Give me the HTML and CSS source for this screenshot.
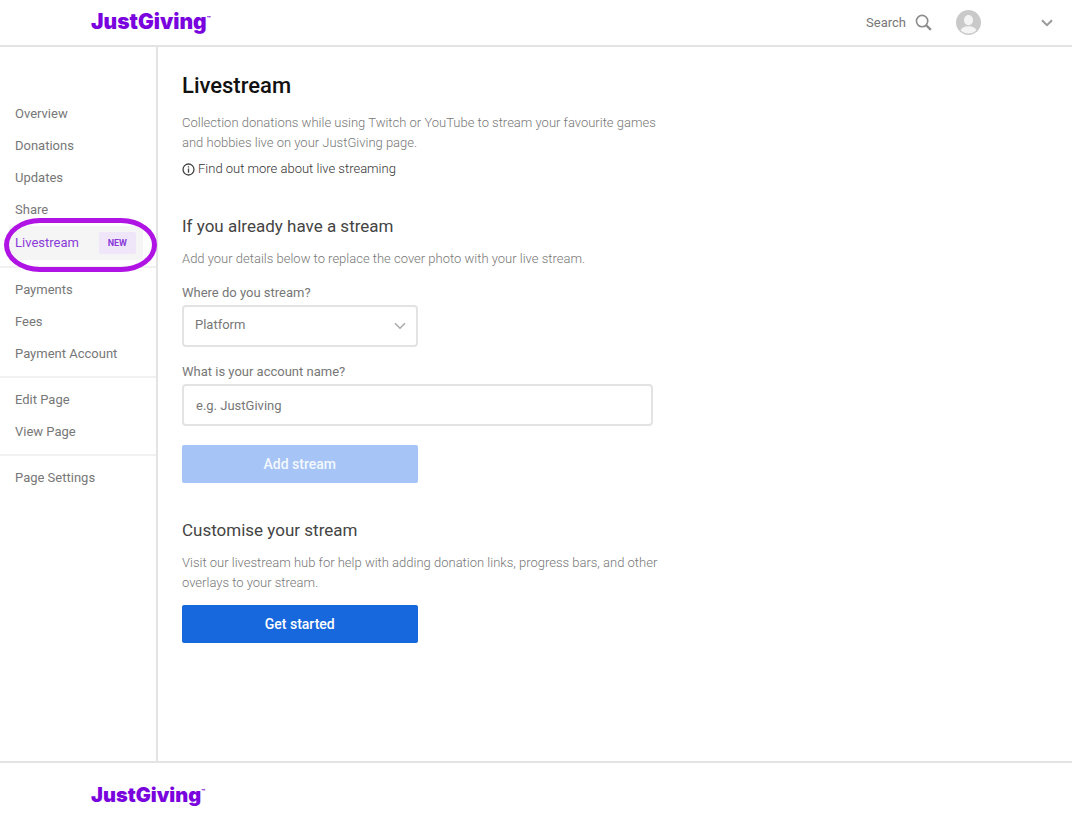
FILE: index.html
```html
<!DOCTYPE html>
<html lang="en">
<head>
<meta charset="utf-8">
<meta name="viewport" content="width=device-width, initial-scale=1">
<title>Livestream - JustGiving</title>
<link rel="stylesheet" href="styles.css">
</head>
<body>
<header class="topbar">
  <a class="logo" href="#">JustGiving<sup class="logo-tm">™</sup></a>
  <div class="topbar-tools">
    <a class="search" href="#">Search
      <svg class="search-icon" viewBox="0 0 18 18" aria-hidden="true"><circle cx="7.5" cy="7.5" r="6" fill="none" stroke="#8c8c8c" stroke-width="1.7"/><path d="M12 12l4.8 4.8" stroke="#8c8c8c" stroke-width="2.4"/></svg>
    </a>
    <button class="account" type="button" aria-label="Account menu">
      <svg class="avatar" viewBox="0 0 24 24" aria-hidden="true"><defs><clipPath id="face"><circle cx="12" cy="12" r="10.5"/></clipPath></defs><circle cx="12" cy="12" r="12" fill="#c9c9c9"/><g clip-path="url(#face)" fill="#f4f4f4"><ellipse cx="12" cy="9.7" rx="4.4" ry="4.9"/><ellipse cx="12" cy="20.2" rx="7.8" ry="4.6"/></g></svg>
      <svg class="chevron" viewBox="0 0 12 8" aria-hidden="true"><path d="M1 1.2l5 5 5-5" fill="none" stroke="#999" stroke-width="2"/></svg>
    </button>
  </div>
</header>
<div class="layout">
  <nav class="sidebar" aria-label="Page management">
    <div class="nav-group">
      <a class="nav-link" href="#">Overview</a>
      <a class="nav-link" href="#">Donations</a>
      <a class="nav-link" href="#">Updates</a>
      <a class="nav-link" href="#">Share</a>
      <a class="nav-link nav-link-active" href="#" aria-current="page">Livestream <span class="tag">NEW</span></a>
    </div>
    <div class="nav-group">
      <a class="nav-link" href="#">Payments</a>
      <a class="nav-link" href="#">Fees</a>
      <a class="nav-link" href="#">Payment Account</a>
    </div>
    <div class="nav-group">
      <a class="nav-link" href="#">Edit Page</a>
      <a class="nav-link" href="#">View Page</a>
    </div>
    <div class="nav-group">
      <a class="nav-link" href="#">Page Settings</a>
    </div>
  </nav>
  <main class="content">
    <section class="intro">
      <h1 class="title">Livestream</h1>
      <p class="text">Collection donations while using Twitch or YouTube to stream your favourite games and hobbies live on your JustGiving page.</p>
      <a class="more" href="#">
        <svg class="info-icon" viewBox="0 0 14 14" aria-hidden="true"><circle cx="7" cy="7" r="5.9" fill="none" stroke="#444" stroke-width="1.4"/><path d="M7 6v4.4M7 3.5v1.4" stroke="#444" stroke-width="1.4"/></svg>
        Find out more about live streaming</a>
    </section>
    <form class="stream-form">
      <h2 class="subtitle">If you already have a stream</h2>
      <p class="text">Add your details below to replace the cover photo with your live stream.</p>
      <label class="label" for="platform">Where do you stream?</label>
      <div class="select-wrap">
        <select class="field" id="platform"><option>Platform</option></select>
        <svg class="chevron select-chevron" viewBox="0 0 12 8" aria-hidden="true"><path d="M1 1.2l5 5 5-5" fill="none" stroke="#aaa" stroke-width="1.6"/></svg>
      </div>
      <label class="label" for="account">What is your account name?</label>
      <input class="field" id="account" type="text" placeholder="e.g. JustGiving">
      <button class="button" type="button" disabled>Add stream</button>
    </form>
    <section class="customise">
      <h2 class="subtitle">Customise your stream</h2>
      <p class="text">Visit our livestream hub for help with adding donation links, progress bars, and other overlays to your stream.</p>
      <button class="button" type="button">Get started</button>
    </section>
  </main>
</div>
<footer class="footer">
  <a class="logo logo-small" href="#">JustGiving<sup class="logo-tm">™</sup></a>
</footer>
</body>
</html>
```
FILE: styles.css
```css
* { box-sizing: border-box; }
body {
  margin: 0;
  min-height: 100vh;
  display: flex;
  flex-direction: column;
  font-family: Roboto, "Liberation Sans", sans-serif;
  font-size: 13px;
  line-height: 20px;
  color: #777;
  background: #fff;
}
a { color: inherit; text-decoration: none; }
h1, h2, p { margin: 0; }

.topbar {
  display: flex;
  align-items: center;
  justify-content: space-between;
  height: 47px;
  padding: 0 19px 0 91px;
  border-bottom: 2px solid #e3e3e3;
}
.logo {
  margin-top: -2px;
  font-family: Inter, Lato, sans-serif;
  font-weight: 900;
  font-size: 21px;
  line-height: 28px;
  color: #7a04dd;
}
.logo-small { font-size: 20px; }
.logo-tm { font-size: 6px; line-height: 0; vertical-align: 8px; }
.topbar-tools { display: flex; align-items: center; gap: 24px; }
.search { display: flex; align-items: center; gap: 9px; }
.search-icon { width: 17px; height: 17px; }
.account {
  display: flex;
  align-items: center;
  gap: 60px;
  padding: 0;
  border: 0;
  background: none;
}
.avatar { width: 25px; height: 25px; }
.chevron { width: 12px; height: 8px; }

.layout { display: flex; flex: 1; }
.sidebar {
  flex: none;
  width: 158px;
  padding-top: 45px;
  border-right: 2px solid #e3e3e3;
}
.nav-group { padding: 6px 0; border-bottom: 2px solid #f1f1f1; }
.nav-group:last-child { border-bottom: 0; }
.nav-link { display: block; padding: 6px 15px; }
.nav-link-active {
  position: relative;
  display: flex;
  align-items: center;
  justify-content: space-between;
  height: 34px;
  margin: 0 13px 0 9px;
  padding: 0 7px 0 6px;
  color: #8a3bd8;
  background: #f5f5f5;
}
.nav-link-active::after {
  content: "";
  position: absolute;
  inset: -8px -14px -12px -5px;
  border: 5px solid #b014e4;
  border-radius: 36px / 27px;
}
.tag {
  padding: 0 9px;
  font-size: 9px;
  line-height: 22px;
  font-weight: 700;
  background: #f0e6fa;
  border-radius: 2px;
}

.content {
  flex: 1;
  display: flex;
  flex-direction: column;
  gap: 35px;
  max-width: 520px;
  padding: 24px 25px 24px 24px;
}
.title { font-size: 22px; line-height: 30px; font-weight: 500; color: #111; }
.text { margin-right: -20px; font-weight: 300; color: #777; }
.intro .text { margin-top: 12px; margin-bottom: 6px; }
.more { display: flex; align-items: center; gap: 3px; font-weight: 300; color: #333; }
.info-icon { width: 13px; height: 13px; }
.subtitle { margin-bottom: 11px; font-size: 17px; line-height: 24px; font-weight: 400; color: #444; }
.label { display: block; margin-top: 14px; }
.select-wrap { position: relative; width: 50%; margin-bottom: 15px; }
.select-chevron { position: absolute; right: 12px; top: 17px; pointer-events: none; }
.field {
  display: block;
  width: 100%;
  height: 42px;
  margin-top: 2px;
  padding: 0 12px;
  border: 2px solid #e3e3e3;
  border-radius: 4px;
  font: inherit;
  color: #777;
  background: #fff;
  appearance: none;
}
select.field { padding: 0 11px 2px; }
.field::placeholder { color: #777; opacity: 1; }
.button {
  display: block;
  width: 50%;
  height: 38px;
  padding: 0;
  border: 0;
  border-radius: 2px;
  font: 500 14px/20px Roboto, "Liberation Sans", sans-serif;
  color: #fff;
  background: #1768dd;
}
.button:disabled { margin-top: 19px; color: #f4f8ff; background: #a6c4f5; }
.customise .button { margin-top: 12px; }

.footer {
  padding: 18px 91px 12px;
  border-top: 2px solid #e3e3e3;
}
```
